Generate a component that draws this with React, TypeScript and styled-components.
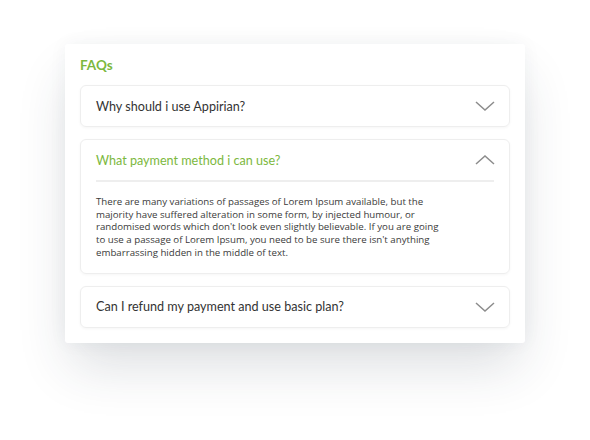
import React from "react"
import styled, { createGlobalStyle } from "styled-components"

const GlobalStyle = createGlobalStyle`
  html, body {
    margin: 0;
    background: #fff;
  }
  body {
    font-family: Lato, "Liberation Sans", sans-serif;
  }
`

const Page = styled.div`
  width: 590px;
  height: 440px;
  padding: 44px 0 0 65px;
  box-sizing: border-box;
`

const Panel = styled.section`
  width: 460px;
  box-sizing: border-box;
  background: #fff;
  border-radius: 3px;
  padding: 13px 15px 15px;
  box-shadow: 0 28px 50px -6px rgba(40, 50, 70, 0.16), 0 0 18px rgba(40, 50, 70, 0.05);
  display: flex;
  flex-direction: column;
  gap: 12px;
`

const Title = styled.h2`
  margin: 0;
  font-size: 13.5px;
  line-height: 16px;
  font-weight: 700;
  color: #7cb83e;
`

const Item = styled.div`
  border: 1px solid #eeeeee;
  border-radius: 6px;
  box-shadow: 0 1px 3px rgba(0, 0, 0, 0.04);
  padding: 0 15px;
`

const Head = styled.div<{ $open?: boolean }>`
  display: flex;
  align-items: center;
  justify-content: space-between;
  height: 40px;
  border-bottom: ${(p) => (p.$open ? "2px solid #eeeeee" : "none")};
`

const Question = styled.span<{ $open?: boolean }>`
  font-size: 12.6px;
  color: ${(p) => (p.$open ? "#7cb83e" : "#333")};
`

const Answer = styled.p`
  margin: 0;
  padding: 14px 0 13px;
  width: 350px;
  font-family: "Open Sans", "Liberation Sans", sans-serif;
  font-size: 9.7px;
  line-height: 12.7px;
  color: #3a3a3a;
`

const Chevron = ({ up }: { up?: boolean }) => (
  <svg width="20" height="10" viewBox="0 0 20 10" style={{ marginRight: -1 }}>
    <path
      d={up ? "M1 9 L10 1 L19 9" : "M1 1 L10 9 L19 1"}
      fill="none"
      stroke="#8c8c8c"
      strokeWidth="1.5"
    />
  </svg>
)

const faqs = [
  { q: "Why should i use Appirian?" },
  {
    q: "What payment method i can use?",
    a: "There are many variations of passages of Lorem Ipsum available, but the majority have suffered alteration in some form, by injected humour, or randomised words which don't look even slightly believable. If you are going to use a passage of Lorem Ipsum, you need to be sure there isn't anything embarrassing hidden in the middle of text.",
  },
  { q: "Can I refund my payment and use basic plan?" },
]

export default function App() {
  return (
    <Page>
      <GlobalStyle />
      <Panel>
        <Title>FAQs</Title>
        {faqs.map((f) => (
          <Item key={f.q}>
            <Head $open={!!f.a}>
              <Question $open={!!f.a}>{f.q}</Question>
              <Chevron up={!!f.a} />
            </Head>
            {f.a && <Answer>{f.a}</Answer>}
          </Item>
        ))}
      </Panel>
    </Page>
  )
}
